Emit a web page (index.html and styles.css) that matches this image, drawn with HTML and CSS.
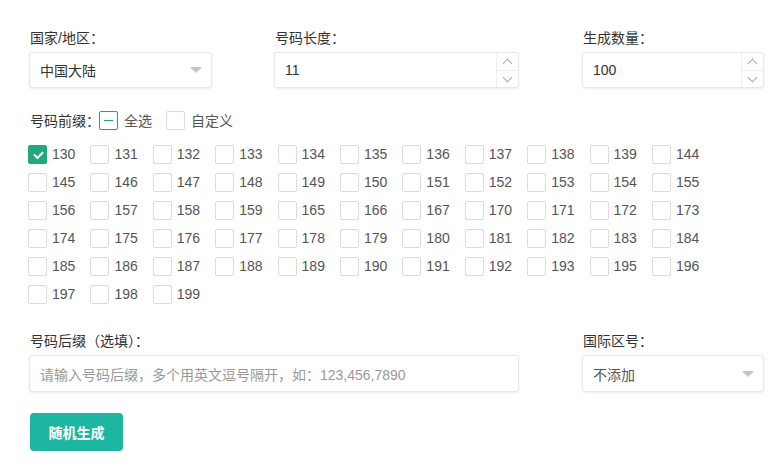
FILE: index.html
```html
<!DOCTYPE html>
<html lang="zh-CN">
<head>
    <meta charset="UTF-8">
    <title>手机号码生成</title>
    <link rel="stylesheet" href="styles.css">
</head>
<body>
    <div class="generator">
        <div class="form-row">
            <div class="field">
                <label>国家/地区：</label>
                <div class="select-box">
                    <span>中国大陆</span>
                    <span class="caret"></span>
                </div>
            </div>
            <div class="field">
                <label>号码长度：</label>
                <div class="number-box">
                    <span class="value">11</span>
                    <div class="spinner">
                        <span class="up"></span>
                        <span class="down"></span>
                    </div>
                </div>
            </div>
            <div class="field">
                <label>生成数量：</label>
                <div class="number-box">
                    <span class="value">100</span>
                    <div class="spinner">
                        <span class="up"></span>
                        <span class="down"></span>
                    </div>
                </div>
            </div>
        </div>

        <div class="prefix-head">
            <span class="prefix-label">号码前缀：</span>
            <label class="check"><span class="box indeterminate"></span>全选</label>
            <label class="check"><span class="box"></span>自定义</label>
        </div>

        <div class="prefix-list" id="prefix-list"></div>

        <div class="form-row bottom-row">
            <div class="field wide">
                <label>号码后缀（选填）：</label>
                <div class="text-box">请输入号码后缀，多个用英文逗号隔开，如：123,456,7890</div>
            </div>
            <div class="field">
                <label>国际区号：</label>
                <div class="select-box tall">
                    <span class="muted">不添加</span>
                    <span class="caret"></span>
                </div>
            </div>
        </div>

        <button class="generate-btn">随机生成</button>
    </div>

    <script>
        const prefixes = [130, 131, 132, 133, 134, 135, 136, 137, 138, 139, 144,
            145, 146, 147, 148, 149, 150, 151, 152, 153, 154, 155,
            156, 157, 158, 159, 165, 166, 167, 170, 171, 172, 173,
            174, 175, 176, 177, 178, 179, 180, 181, 182, 183, 184,
            185, 186, 187, 188, 189, 190, 191, 192, 193, 195, 196,
            197, 198, 199];
        const list = document.getElementById('prefix-list');

        prefixes.forEach(function(p) {
            const item = document.createElement('label');
            item.className = 'check item';
            const box = document.createElement('span');
            box.className = p === 130 ? 'box checked' : 'box';
            item.appendChild(box);
            item.appendChild(document.createTextNode(p));
            list.appendChild(item);
        });
    </script>
</body>
</html>
```

FILE: styles.css
```css
* {
    margin: 0;
    padding: 0;
    box-sizing: border-box;
}

body {
    font-family: 'Liberation Sans', 'Noto Sans CJK SC', sans-serif;
    font-size: 14px;
    color: #333;
    background: white;
}

.generator {
    padding: 28px 15px 0 29px;
}

.form-row {
    display: grid;
    grid-template-columns: 183px 245px 183px;
    column-gap: 62px;
}

.form-row .field:last-child {
    margin-left: 1px;
}

.field label {
    display: block;
    height: 20px;
    line-height: 20px;
    margin-bottom: 4px;
    padding-left: 1px;
    color: #333;
}

.select-box,
.number-box,
.text-box {
    height: 36px;
    border: 1px solid #e8e8e8;
    border-radius: 3px;
    box-shadow: 0 1px 3px rgba(0, 0, 0, 0.08);
    background: white;
    display: flex;
    align-items: center;
    padding-left: 10px;
}

.select-box {
    justify-content: space-between;
    padding-right: 9px;
}

.select-box.tall,
.text-box {
    height: 37px;
}

.muted {
    color: #555;
}

.caret {
    width: 0;
    height: 0;
    border-left: 6px solid transparent;
    border-right: 6px solid transparent;
    border-top: 6px solid #c4c4c4;
}

.number-box {
    justify-content: space-between;
    padding-right: 0;
}

.spinner {
    width: 22px;
    height: 100%;
    border-left: 1px solid #efefef;
    display: flex;
    flex-direction: column;
}

.spinner span {
    flex: 1;
    position: relative;
}

.spinner .up {
    border-bottom: 1px solid #efefef;
}

.spinner span::after {
    content: '';
    position: absolute;
    left: 7px;
    width: 6px;
    height: 6px;
    border-left: 1px solid #aaa;
    border-top: 1px solid #aaa;
}

.spinner .up::after {
    top: 7px;
    transform: rotate(45deg);
}

.spinner .down::after {
    top: 3px;
    transform: rotate(225deg);
}

.text-box {
    color: #999;
}

.prefix-head {
    display: flex;
    align-items: center;
    margin-top: 22px;
    height: 20px;
}

.prefix-label {
    margin-right: -1px;
    padding-left: 1px;
}

.check {
    display: inline-flex;
    align-items: center;
    color: #555;
}

.prefix-head .check {
    margin-right: 14px;
}

.box {
    width: 19px;
    height: 19px;
    border: 1px solid #dcdcdc;
    border-radius: 2px;
    background: white;
    margin-right: 6px;
    position: relative;
}

.box.indeterminate {
    border-color: #1aa38a;
}

.box.indeterminate::after {
    content: '';
    position: absolute;
    left: 4px;
    top: 8px;
    width: 9px;
    height: 1px;
    background: #1aa38a;
}

.box.checked {
    background: #1fa97c;
    border-color: #1fa97c;
}

.box.checked::after {
    content: '';
    position: absolute;
    left: 5px;
    top: 3px;
    width: 7px;
    height: 4px;
    border-left: 2px solid white;
    border-bottom: 2px solid white;
    transform: rotate(-45deg);
    transform-origin: center;
    margin-top: 2px;
}

.prefix-list {
    display: flex;
    flex-wrap: wrap;
    width: 690px;
    margin-top: 14px;
    margin-left: -1px;
    row-gap: 8px;
}

.prefix-list .item {
    width: 62.4px;
    height: 20px;
    color: #555;
}

.prefix-list .box {
    margin-right: 5px;
}

.bottom-row {
    margin-top: 27px;
}

.wide {
    grid-column: span 2;
}

.generate-btn {
    margin-top: 21px;
    margin-left: 1px;
    width: 93px;
    height: 38px;
    border: none;
    border-radius: 4px;
    background: #1db6a0;
    color: white;
    font-family: inherit;
    font-size: 14px;
    font-weight: bold;
}
```
